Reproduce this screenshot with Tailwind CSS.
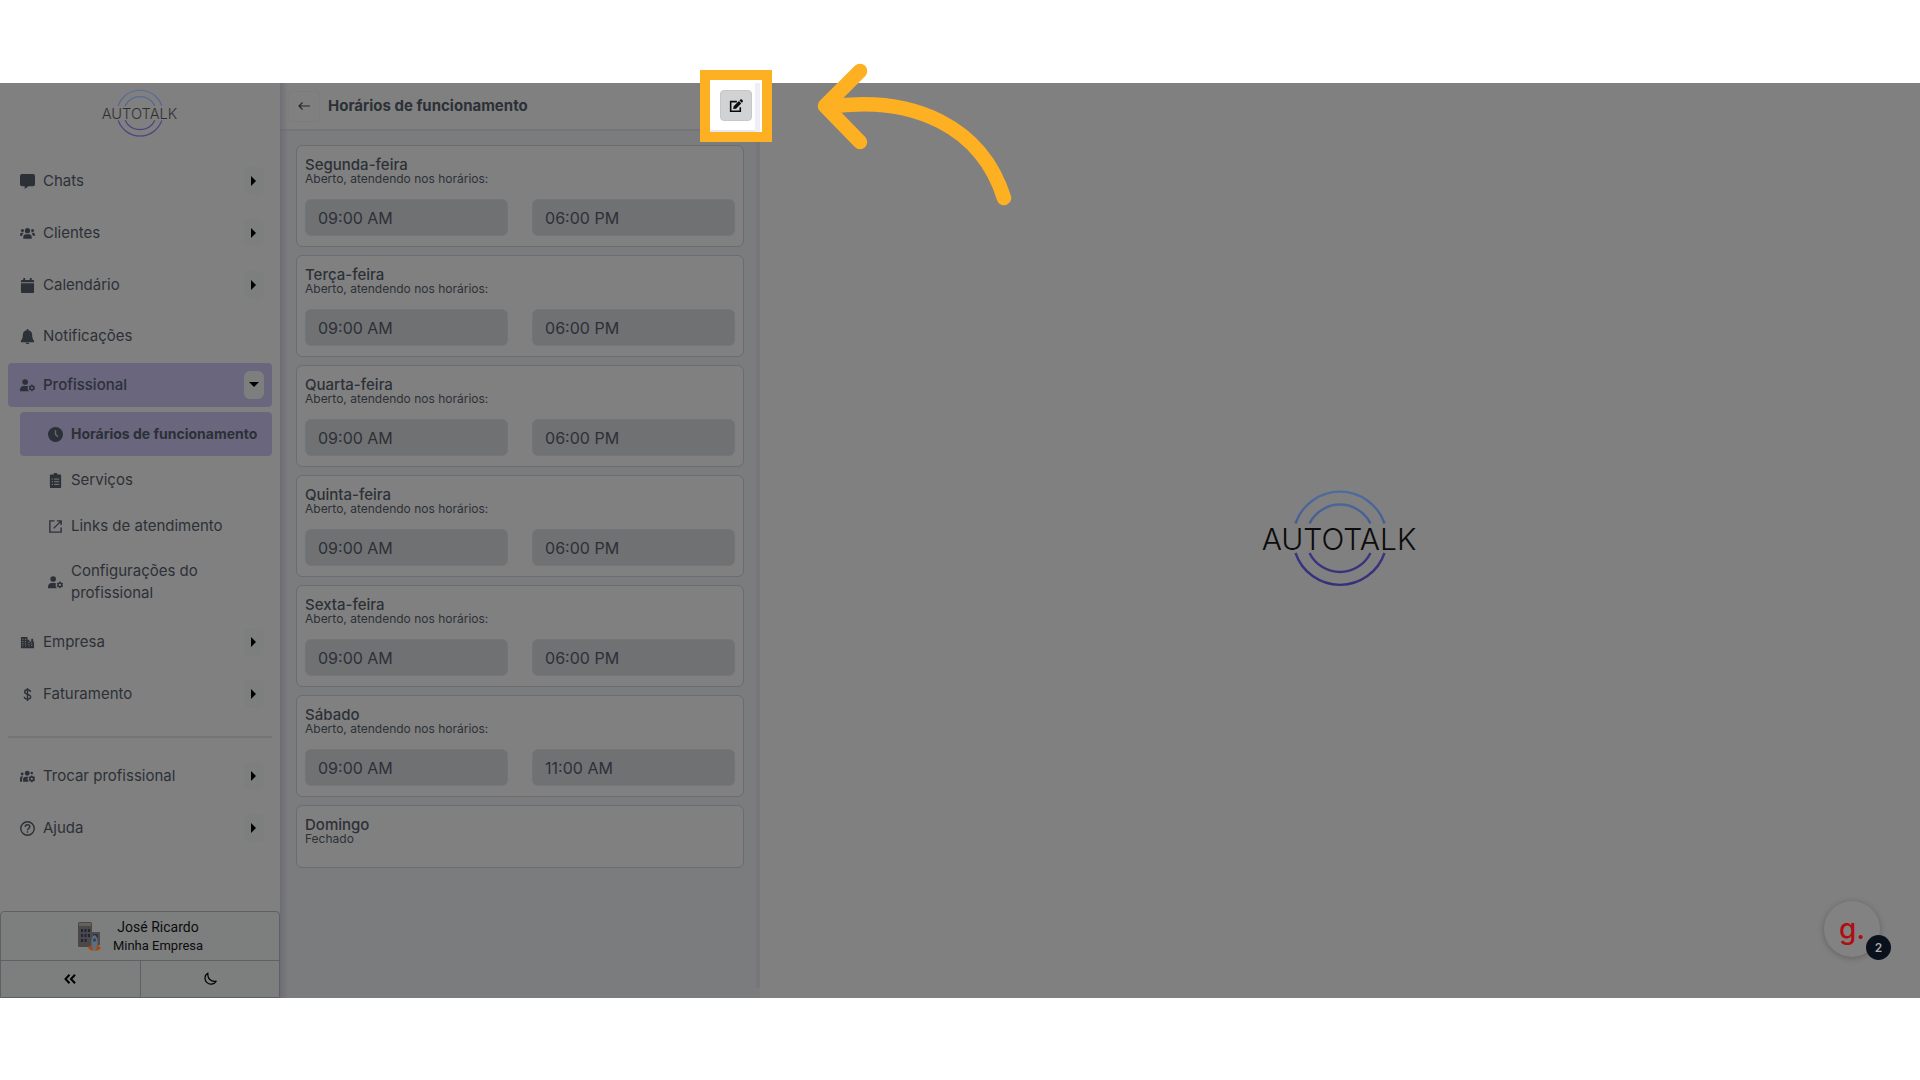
<!DOCTYPE html>
<html lang="pt-BR">
<head>
    <meta charset="UTF-8">
    <meta name="viewport" content="width=device-width, initial-scale=1.0">
    <title>Autotalk - Horários de funcionamento</title>
    <script src="https://cdn.jsdelivr.net/npm/@tailwindcss/browser@4"></script>
</head>
<body class="bg-white font-['Inter',sans-serif] text-[#2c3037]">
    <!-- Icons -->
    <svg class="absolute w-0 h-0">
        <defs>
            <linearGradient id="ring" gradientUnits="userSpaceOnUse" x1="80" y1="2" x2="80" y2="98">
                <stop offset="0" stop-color="#4c6c9c"/>
                <stop offset="0.4" stop-color="#465a90"/>
                <stop offset="0.6" stop-color="#3c3580"/>
                <stop offset="1" stop-color="#35307a"/>
            </linearGradient>
        </defs>
        <symbol id="chat" viewBox="0 0 16 16"><path fill="currentColor" d="M2 0h12a2 2 0 0 1 2 2v9a2 2 0 0 1-2 2H9l-4 3v-3H2a2 2 0 0 1-2-2V2a2 2 0 0 1 2-2z"/></symbol>
        <symbol id="users" viewBox="0 0 16 16"><g fill="currentColor"><circle cx="8" cy="5" r="2.800"/><circle cx="2.600" cy="4.800" r="1.600"/><circle cx="13.400" cy="4.800" r="1.600"/><path d="M3.500 13v-1.500A3 3 0 0 1 6.500 8.700h3a3 3 0 0 1 3 2.800V13a.6.6 0 0 1-.6.6H4.100a.6.6 0 0 1-.6-.6zM0 9.300a2 2 0 0 1 2-2h2a4 4 0 0 0-1.600 3.200H0zM16 9.300a2 2 0 0 0-2-2h-2a4 4 0 0 1 1.600 3.200H16z"/></g></symbol>
        <symbol id="calendar" viewBox="0 0 16 16"><path fill="currentColor" d="M3.500 0h2v2h5V0h2v2H14a1 1 0 0 1 1 1v1.500H1V3a1 1 0 0 1 1-1h1.500zM1 5.500h14V15a1 1 0 0 1-1 1H2a1 1 0 0 1-1-1z"/></symbol>
        <symbol id="bell" viewBox="0 0 16 16"><path fill="currentColor" d="M7.200 0h1.600v1.300C11.400 1.700 13 3.700 13 6.500c0 3 .6 4.500 2 6V14H1v-1.500c1.400-1.500 2-3 2-6 0-2.800 1.600-4.800 4.200-5.200zM6 14.600h4a2 1.500 0 0 1-4 0z"/></symbol>
        <symbol id="usergear" viewBox="0 0 16 16"><circle cx="5.500" cy="4.200" r="3" fill="currentColor"/><path fill="currentColor" d="M0 14v-1.500a4.300 4.300 0 0 1 4-4h3a4 4 0 0 1 1.500.4A4.500 4.500 0 0 0 9.500 14z"/><circle cx="12.700" cy="10.500" r="2" fill="none" stroke="currentColor" stroke-width="1.500"/><path stroke="currentColor" stroke-width="1.400" d="M12.700 7v1.300M12.700 12.700V14M9.700 8.800l1.100.6M14.600 11.600l1.100.6M9.700 12.200l1.100-.6M14.600 9.400l1.100-.6"/></symbol>
        <symbol id="clock" viewBox="0 0 16 16"><circle cx="8" cy="8" r="8" fill="currentColor"/><path d="M8 3.500V8l2.800 2.400" fill="none" stroke="#69667d" stroke-width="1.500"/></symbol>
        <symbol id="clipboard" viewBox="0 0 16 16"><path fill="currentColor" d="M3 1.500h3a2 1.700 0 0 1 4 0h3a1 1 0 0 1 1 1V15a1 1 0 0 1-1 1H3a1 1 0 0 1-1-1V2.500a1 1 0 0 1 1-1z"/><path stroke="#808080" d="M4 6.500h1.300M6.500 6.500H12M4 9.300h1.300M6.500 9.300H12M4 12.100h1.300M6.500 12.100H12"/></symbol>
        <symbol id="external" viewBox="0 0 16 16"><path fill="none" stroke="currentColor" stroke-width="1.500" d="M7 2H2v12h12V9M9.500 2H14v4.500M14 2L6 10"/></symbol>
        <symbol id="building" viewBox="0 0 16 16"><path fill="currentColor" d="M1 2h7v3h2v2h2V4h2v3h1v7H1z"/><path stroke="#808080" stroke-dasharray="1.200 1.200" d="M3 4v8M5.800 4v8M9.500 7.500v5M12.500 8v4"/></symbol>
        <symbol id="dollar" viewBox="0 0 16 16"><path fill="none" stroke="currentColor" stroke-width="1.500" d="M8 1v14M11.200 5.300C11 3.700 9.800 3 8 3S4.900 3.900 4.900 5.400C4.900 8.700 11.400 7 11.400 10.500c0 1.600-1.500 2.500-3.400 2.500s-3.300-.9-3.500-2.600"/></symbol>
        <symbol id="usersgear" viewBox="0 0 16 16"><g fill="currentColor"><circle cx="7.700" cy="4.500" r="2.600"/><circle cx="2.300" cy="5.300" r="1.500"/><circle cx="12.500" cy="4.300" r="1.400"/><path d="M3.300 13.500v-2A3 3 0 0 1 6.300 8.200h2.500a4.500 4.500 0 0 0 .5 5.300zM0 13.500V9.600a2 2 0 0 1 2-1.800h1.300a4.500 4.500 0 0 0-1.100 3v2.700z"/></g><circle cx="12.600" cy="10.500" r="2.100" fill="none" stroke="currentColor" stroke-width="1.800"/><path stroke="currentColor" stroke-width="1.400" d="M12.600 6.800V8M12.600 13v1.200M9.400 8.700l1 .6M14.800 11.700l1 .6M9.400 12.300l1-.6M14.800 9.300l1-.6"/></symbol>
        <symbol id="help" viewBox="0 0 16 16"><circle cx="8" cy="8" r="7.200" fill="none" stroke="currentColor" stroke-width="1.500"/><path fill="none" stroke="currentColor" stroke-width="1.500" d="M5.500 6.300C5.600 4.800 6.600 4 8 4s2.500.9 2.500 2.100C10.500 7.800 8 7.900 8 9.800M8 11v1.600"/></symbol>
        <symbol id="caret" viewBox="0 0 6 10"><path fill="#000" d="M0 0l5 5-5 5z"/></symbol>
        <symbol id="edit" viewBox="0 0 16 16"><path fill="none" stroke="#0a0a0a" stroke-width="1.800" d="M9 3H1.900v11h11V9.500"/><path fill="#0a0a0a" d="M4.800 11.500l.5-3.200 6-6 2.700 2.700-6 6zM12 1.600l.9-.9a1.300 1.300 0 0 1 1.800 0l.8.8a1.300 1.300 0 0 1 0 1.800l-.9.9z"/></symbol>
    </svg>

    <div class="min-h-screen flex flex-col pt-[83px] pb-[82px]">
        <div class="relative flex grow bg-[#808080]">

            <!-- Sidebar -->
            <aside class="relative z-10 w-[280px] shrink-0 flex flex-col bg-[#808080]">
                <a href="#" aria-label="Autotalk" class="flex justify-center pt-[6px] text-[#1c1c1c]">
                    <svg class="w-20 h-[49px] opacity-80" viewBox="0 0 160 100">
                        <path fill="none" stroke="url(#ring)" stroke-width="2.4" d="M35.500 34.500A47 47 0 0 1 124.500 34.500M49.500 34.500A34 34 0 0 1 110.500 34.500M35.500 64A47 47 0 0 0 124.500 64M49.500 64A34 34 0 0 0 110.500 64"/>
                        <text x="79" y="61" text-anchor="middle" font-family="Inter" font-weight="300" font-size="30" fill="currentColor">AUTOTALK</text>
                    </svg>
                </a>
                <nav class="mt-[17px] px-2 flex flex-col text-[15px] leading-[22px]">
                    <div class="h-[52px] pl-3 pr-2 flex items-center">
                        <a href="#" class="grow flex items-center gap-2"><svg class="size-[15px]"><use href="#chat"/></svg>Chats</a>
                        <button aria-label="Abrir Chats" class="w-5 h-7 rounded-md bg-[#7d7f7f] flex items-center justify-center"><svg class="w-[6px] h-[10px]"><use href="#caret"/></svg></button>
                    </div>
                    <div class="h-[52px] pl-3 pr-2 flex items-center">
                        <a href="#" class="grow flex items-center gap-2"><svg class="size-[15px]"><use href="#users"/></svg>Clientes</a>
                        <button aria-label="Abrir Clientes" class="w-5 h-7 rounded-md bg-[#7d7f7f] flex items-center justify-center"><svg class="w-[6px] h-[10px]"><use href="#caret"/></svg></button>
                    </div>
                    <div class="h-[52px] pl-3 pr-2 flex items-center">
                        <a href="#" class="grow flex items-center gap-2"><svg class="size-[15px]"><use href="#calendar"/></svg>Calendário</a>
                        <button aria-label="Abrir Calendário" class="w-5 h-7 rounded-md bg-[#7d7f7f] flex items-center justify-center"><svg class="w-[6px] h-[10px]"><use href="#caret"/></svg></button>
                    </div>
                    <a href="#" class="h-[50px] pl-3 flex items-center gap-2"><svg class="size-[15px]"><use href="#bell"/></svg>Notificações</a>
                    <div class="mt-[2px] h-11 pl-3 pr-2 flex items-center rounded bg-[#69667d] font-medium">
                        <a href="#" class="grow flex items-center gap-2"><svg class="size-[15px]"><use href="#usergear"/></svg>Profissional</a>
                        <button aria-label="Fechar Profissional" class="w-5 h-7 rounded-md bg-[#7d7f7f] flex items-center justify-center"><svg class="w-[6px] h-[10px] rotate-90"><use href="#caret"/></svg></button>
                    </div>
                    <div class="flex flex-col pl-3">
                        <a href="#" class="mt-[5px] h-11 pl-7 flex items-center gap-2 rounded bg-[#69667d] text-sm font-bold whitespace-nowrap"><svg class="size-[15px] shrink-0"><use href="#clock"/></svg>Horários de funcionamento</a>
                        <a href="#" class="mt-px h-[46px] pl-7 flex items-center gap-2"><svg class="size-[15px]"><use href="#clipboard"/></svg>Serviços</a>
                        <a href="#" class="h-[46px] pl-7 flex items-center gap-2"><svg class="size-[15px]"><use href="#external"/></svg>Links de atendimento</a>
                        <a href="#" class="h-[66px] pl-7 pr-12 flex items-center gap-2"><svg class="size-[15px] shrink-0"><use href="#usergear"/></svg>Configurações do profissional</a>
                    </div>
                    <div class="mt-px h-[52px] pl-3 pr-2 flex items-center">
                        <a href="#" class="grow flex items-center gap-2"><svg class="size-[15px]"><use href="#building"/></svg>Empresa</a>
                        <button aria-label="Abrir Empresa" class="w-5 h-7 rounded-md bg-[#7d7f7f] flex items-center justify-center"><svg class="w-[6px] h-[10px]"><use href="#caret"/></svg></button>
                    </div>
                    <div class="h-[52px] pl-3 pr-2 flex items-center">
                        <a href="#" class="grow flex items-center gap-2"><svg class="size-[15px]"><use href="#dollar"/></svg>Faturamento</a>
                        <button aria-label="Abrir Faturamento" class="w-5 h-7 rounded-md bg-[#7d7f7f] flex items-center justify-center"><svg class="w-[6px] h-[10px]"><use href="#caret"/></svg></button>
                    </div>
                    <hr class="mt-4 mb-3 border-0 h-[2px] bg-[#757576]">
                    <div class="h-[52px] pl-3 pr-2 flex items-center">
                        <a href="#" class="grow flex items-center gap-2"><svg class="size-[15px]"><use href="#usersgear"/></svg>Trocar profissional</a>
                        <button aria-label="Abrir Trocar profissional" class="w-5 h-7 rounded-md bg-[#7d7f7f] flex items-center justify-center"><svg class="w-[6px] h-[10px]"><use href="#caret"/></svg></button>
                    </div>
                    <div class="h-[52px] pl-3 pr-2 flex items-center">
                        <a href="#" class="grow flex items-center gap-2"><svg class="size-[15px]"><use href="#help"/></svg>Ajuda</a>
                        <button aria-label="Abrir Ajuda" class="w-5 h-7 rounded-md bg-[#7d7f7f] flex items-center justify-center"><svg class="w-[6px] h-[10px]"><use href="#caret"/></svg></button>
                    </div>
                </nav>

                <!-- Account -->
                <div class="mt-auto border border-[#5e6067] rounded-t bg-[#7d7f7f] text-[#0c0c0e]">
                    <button class="w-full h-12 flex items-center justify-center gap-3 font-['Roboto',sans-serif]">
                        <svg class="w-6 h-[30px]" viewBox="0 0 24 30">
                            <rect x="1" y="1" width="14" height="25" rx="1.500" fill="#4b4847"/>
                            <rect x="2" y="2" width="12" height="3" fill="#65615f"/>
                            <path d="M4 8h2v3H4zM7.500 8h2v3h-2zM11 8h2v3h-2zM4 13h2v3H4zM7.500 13h2v3h-2zM11 13h2v3h-2zM4 18h2v3H4zM7.500 18h2v3h-2z" fill="#20253c"/>
                            <rect x="14" y="11" width="9" height="13" fill="#4e4b4b"/>
                            <path d="M16 13h5v4h-5z" fill="#2c3550"/>
                            <path d="M11 27l3-3h7l3 3-3 2.500h-7z" fill="#a34a12"/>
                            <path d="M17.500 14c3 2 4 6 2.500 11l-1 4h-3l-1-4c-1.500-5-.5-9 2.500-11z" fill="#5f6f80"/>
                            <circle cx="17.500" cy="19" r="1.800" fill="#32465c"/>
                        </svg>
                        <span class="flex flex-col items-center">
                            <span class="text-sm leading-[19px]">José Ricardo</span>
                            <span class="text-[13px] leading-[18px]">Minha Empresa</span>
                        </span>
                    </button>
                    <div class="h-[37px] flex border-t border-[#5e6067]">
                        <button aria-label="Recolher menu" class="flex-1 flex items-center justify-center border-r border-[#5e6067]">
                            <svg class="w-3 h-[10px]" viewBox="0 0 12 10" fill="none" stroke="#000" stroke-width="2"><path d="M5.500 .7L1.500 5l4 4.300M11 .7L7 5l4 4.300"/></svg>
                        </button>
                        <button aria-label="Tema escuro" class="flex-1 flex items-center justify-center">
                            <svg class="size-[14px]" viewBox="0 0 14 14" fill="none" stroke="#000" stroke-width="1.200"><path d="M5 1A6 6 0 1 0 13.200 9.200C8 10.200 4 6.500 5 1z" stroke-linejoin="round"/></svg>
                        </button>
                    </div>
                </div>
                <div class="absolute left-full inset-y-0 w-2 bg-linear-to-r from-[#646470]/60 to-transparent"></div>
            </aside>

            <!-- Opening hours -->
            <section class="w-[480px] shrink-0 flex flex-col bg-[#7b7c7e]">
                <header class="relative h-[48px] pl-2 pr-2 flex items-center bg-[#808080] border-b-2 border-[#747578]">
                    <button aria-label="Voltar" class="w-8 h-[31px] rounded border border-[#7c7c7e] flex items-center justify-center">
                        <svg class="w-3 h-2" viewBox="0 0 12 8" fill="none" stroke="#24272c" stroke-width="1.200"><path d="M12 4H1M4.500 .5L1 4l3.500 3.500"/></svg>
                    </button>
                    <h1 class="ml-2 text-[15px] font-bold">Horários de funcionamento</h1>

                    <!-- Spotlight on the edit button -->
                    <div class="absolute -right-3 -top-[13px] size-[72px] border-10 border-[#fdb022] bg-white">
                        <div class="absolute right-[2px] top-[3px] bottom-0 w-[5px] bg-[#efeef6]"></div>
                        <div class="absolute left-0 right-[7px] bottom-0 h-[2px] bg-[#e6e8ee]"></div>
                        <button aria-label="Editar horários" class="absolute left-[10px] top-[10px] w-8 h-[31px] rounded border border-[#c6c7c9] bg-[#d1d2d4] flex items-center justify-center"><svg class="size-[14px]"><use href="#edit"/></svg></button>
                    </div>
                    <svg class="absolute left-[536px] -top-[21px] w-[200px] h-[150px]" viewBox="816 62 200 150" fill="none" stroke="#fdb022" stroke-width="14.500" stroke-linecap="round" stroke-linejoin="round">
                        <path d="M860 71L825 106L860 142M827 107C915 94 982 128 1004 198"/>
                    </svg>
                </header>
                <div class="grow flex">
                    <div id="days" class="grow pt-[14px] pl-4 pr-3 flex flex-col gap-2"></div>
                    <div class="w-[5px] mb-[10px] bg-[#77767b]"></div>
                </div>
            </section>

            <main class="grow flex items-center justify-center pb-1 text-[#0c0c0c]">
                <svg role="img" aria-label="Autotalk" class="w-[160px] h-[100px]" viewBox="0 0 160 100">
                    <path fill="none" stroke="url(#ring)" stroke-width="2.4" d="M35.500 34.500A47 47 0 0 1 124.500 34.500M49.500 34.500A34 34 0 0 1 110.500 34.500M35.500 64A47 47 0 0 0 124.500 64M49.500 64A34 34 0 0 0 110.500 64"/>
                    <text x="79" y="61" text-anchor="middle" font-family="Inter" font-weight="300" font-size="30" fill="currentColor">AUTOTALK</text>
                </svg>
            </main>

            <!-- Help widget -->
            <button aria-label="Guias" class="absolute right-10 bottom-[41px] size-14 rounded-full bg-[#828282] shadow-[0_1px_6px_#00000040] text-[#b00d10]">
                <span class="block text-[28px] leading-[42px] font-medium">g.</span>
                <span class="absolute left-[42px] top-[34px] size-[25px] rounded-full bg-[#0a101c] text-[#a8aab0] text-xs leading-[25px] font-semibold">2</span>
            </button>
        </div>
    </div>

    <script>
        const days = [
            { name: 'Segunda-feira', open: '09:00 AM', close: '06:00 PM' },
            { name: 'Terça-feira', open: '09:00 AM', close: '06:00 PM' },
            { name: 'Quarta-feira', open: '09:00 AM', close: '06:00 PM' },
            { name: 'Quinta-feira', open: '09:00 AM', close: '06:00 PM' },
            { name: 'Sexta-feira', open: '09:00 AM', close: '06:00 PM' },
            { name: 'Sábado', open: '09:00 AM', close: '11:00 AM' },
            { name: 'Domingo' }
        ];

        document.getElementById('days').innerHTML = days.map(day => `
            <div class="px-2 pt-[11px] pb-2 rounded-md border border-[#6b6c6f] bg-[#808080]">
                <h2 class="text-[15px] leading-4 font-medium">${day.name}</h2>
                <p class="text-xs leading-3">${day.open ? 'Aberto, atendendo nos horários:' : 'Fechado'}</p>
                ${day.open ? `
                <div class="mt-[14px] mb-[2px] grid grid-cols-2 gap-6">
                    <input type="text" readonly aria-label="${day.name}, abertura" value="${day.open}" class="min-w-0 h-[37px] px-3 rounded-md border border-[#737578] bg-[#707173] text-base">
                    <input type="text" readonly aria-label="${day.name}, fechamento" value="${day.close}" class="min-w-0 h-[37px] px-3 rounded-md border border-[#737578] bg-[#707173] text-base">
                </div>` : '<div class="h-[14px]"></div>'}
            </div>`).join('');
    </script>
</body>
</html>
